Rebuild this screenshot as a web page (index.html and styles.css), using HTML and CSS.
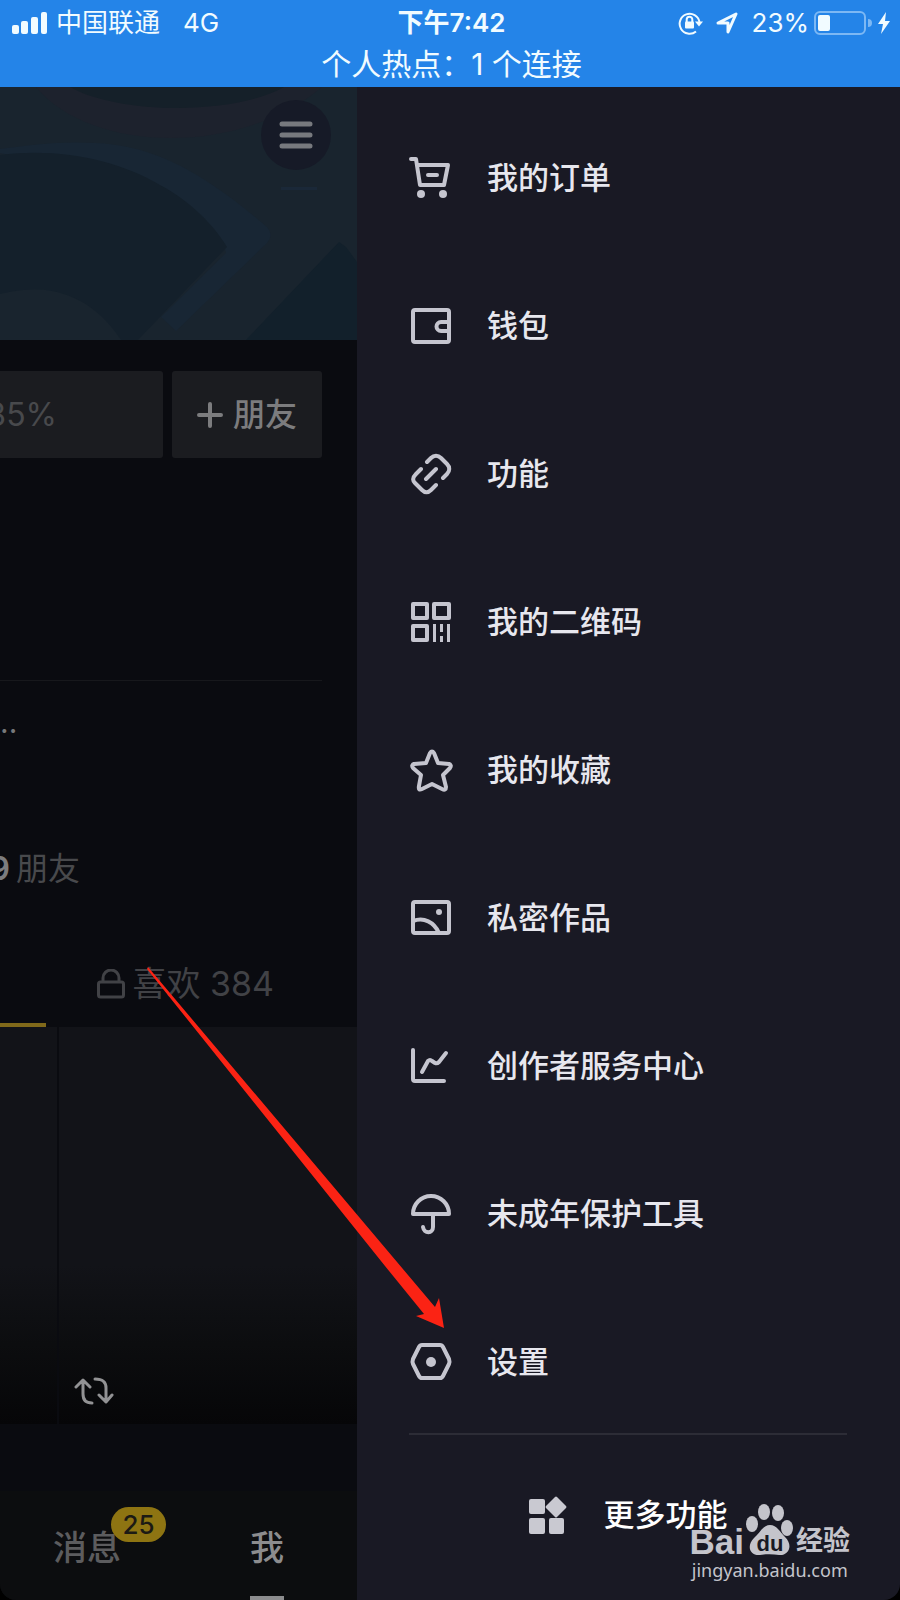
FILE: index.html
```html
<!DOCTYPE html>
<html lang="zh-CN">
<head>
<meta charset="utf-8">
<meta name="viewport" content="width=device-width, initial-scale=1">
<title>我</title>
<link rel="stylesheet" href="styles.css">
</head>
<body>
<div class="screen">
  <header class="status">
    <div class="status-row">
      <div class="status-left">
        <svg class="signal" viewBox="0 0 36 22" aria-hidden="true"><rect x="0" y="13" width="7" height="9" rx="2"/><rect x="9" y="9" width="7" height="13" rx="2"/><rect x="19" y="5" width="7" height="17" rx="2"/><rect x="29" y="0" width="6" height="22" rx="2"/></svg>
        <span class="carrier">中国联通</span>
        <span class="network">4G</span>
      </div>
      <div class="time">下午7:42</div>
      <div class="status-right">
        <svg class="rotation" viewBox="0 0 26 24" aria-hidden="true"><path class="line" d="M18 20.500A10 10 0 1 1 21.500 11"/><path d="M17 10.500h8l-4 5z"/><rect x="7" y="10.500" width="9" height="7" rx="1"/><path class="thin" d="M8.700 11V8.500a2.800 2.800 0 0 1 5.600 0V11"/></svg>
        <svg class="location" viewBox="0 0 22 22" aria-hidden="true"><path d="M2 11 20 2 12 20V11z"/></svg>
        <span class="percent">23%</span>
        <svg class="battery" viewBox="0 0 58 26" aria-hidden="true"><rect class="shell" x="1" y="2" width="50" height="22" rx="5"/><rect x="4" y="5" width="12" height="16" rx="2"/><path class="cap" d="M54 9a4 4 0 0 1 0 8z"/></svg>
        <svg class="bolt" viewBox="0 0 14 24" aria-hidden="true"><path d="M9 1 1 13h5L4 23 13 10H8z"/></svg>
      </div>
    </div>
    <div class="hotspot">个人热点：1 个连接</div>
  </header>

  <div class="columns">
    <main class="profile">
      <div class="cover">
        <svg class="cover-art" viewBox="0 0 357 253" preserveAspectRatio="none" aria-hidden="true">
          <path fill="#152029" d="M60 0C110 28 240 34 286 0z"/>
          <path fill="#1d222d" d="M36 0C90 66 240 70 322 0H284C235 28 120 28 70 0z"/>
          <path fill="#182634" d="M0 62C30 58 60 54 95 56C150 58 200 82 267 140Q274 148 267 156L176 244L161 230L226 166Q220 110 0 66z"/>
          <path fill="#14202b" d="M0 68C60 60 120 74 160 98C190 114 214 138 227 160L138 253H121C106 230 84 210 52 204Q30 200 0 207z"/>
          <path fill="#12202b" d="M246 253 339 155 346 160 357 175V253z"/>
          <rect fill="#1a2838" x="281" y="100" width="36" height="3"/>
        </svg>
        <button class="menu-button" aria-label="菜单"><svg viewBox="0 0 34 28" aria-hidden="true"><path d="M3 3h28M3 14h28M3 25h28"/></svg></button>
      </div>
      <div class="actions">
        <button class="edit">85%</button>
        <button class="add"><svg viewBox="0 0 26 26" aria-hidden="true"><path d="M13 2v22M2 13h22"/></svg>朋友</button>
      </div>
      <div class="bio">..</div>
      <div class="stats"><strong>9</strong><span>朋友</span></div>
      <div class="tabs">
        <span class="active-line"></span>
        <button class="likes"><svg viewBox="0 0 28 30" aria-hidden="true"><rect x="1.500" y="13" width="25" height="15" rx="2"/><path d="M6 13V9a8 8 0 0 1 16 0v4"/></svg>喜欢 384</button>
      </div>
      <div class="works">
        <div class="work"></div>
        <div class="work"><svg viewBox="0 0 40 28" aria-hidden="true"><path d="M18 26C12 26 9 23 9 17V4M2 10l7-7 7 7M21 2c8 0 11 3 11 9v12M25 18l7 7 6-7"/></svg></div>
      </div>
      <nav class="bottom-nav">
        <a class="messages" href="#">消息<span class="badge">25</span></a>
        <a class="me" href="#">我</a>
      </nav>
    </main>

    <aside class="drawer">
      <nav class="menu">
        <a class="item" href="#"><svg viewBox="0 0 44 44" aria-hidden="true"><path d="M2 3h5l4 26h24l4-20H8M19 19h9"/><circle class="solid" cx="12" cy="38" r="4"/><circle class="solid" cx="34" cy="38" r="4"/></svg>我的订单</a>
        <a class="item" href="#"><svg viewBox="0 0 44 44" aria-hidden="true"><rect x="4" y="6" width="36" height="32" rx="2"/><path d="M40 18h-8a4 4 0 0 0 0 9h8"/></svg>钱包</a>
        <a class="item" href="#"><svg viewBox="0 0 44 44" aria-hidden="true"><path d="M18 10 22 6C25 3 29 3 32 6L38 12C41 15 41 19 38 22L34 26M12 17 7 22C4 25 3 28 6 31L13 38C16 41 19 41 22 38L27 33M17 27 27 17"/></svg>功能</a>
        <a class="item" href="#"><svg viewBox="0 0 44 44" aria-hidden="true"><rect x="4" y="4" width="14" height="14"/><rect x="25" y="4" width="15" height="14"/><rect x="4" y="26" width="14" height="14"/><path class="bars" d="M25.500 24v18M32.500 24v8M32.500 36v6M39.500 24v18"/></svg>我的二维码</a>
        <a class="item" href="#"><svg viewBox="0 0 44 44" aria-hidden="true"><path d="M21 5Q23 2 25 5L29 15 40 16Q43 17 41 20L34 27 37 39Q37 43 33 41L23 36 13 41Q9 43 10 38L12 27 4 20Q2 17 5 16L17 15z"/></svg>我的收藏</a>
        <a class="item" href="#"><svg viewBox="0 0 44 44" aria-hidden="true"><rect x="4" y="6" width="36" height="31" rx="2"/><path d="M4 25C15 21 25 26 30 37"/><circle class="solid" cx="30" cy="16" r="3"/></svg>私密作品</a>
        <a class="item" href="#"><svg viewBox="0 0 44 44" aria-hidden="true"><path d="M4 6v29q0 2 2 2h29M13 28l6-11q2-2 4 0l3 2q2 1 4-1l7-9"/></svg>创作者服务中心</a>
        <a class="item" href="#"><svg viewBox="0 0 44 44" aria-hidden="true"><path d="M4 22a18 18 0 0 1 36 0zM24 22v13c0 7-9 7-10 0"/></svg>未成年保护工具</a>
        <a class="item" href="#"><svg viewBox="0 0 44 44" aria-hidden="true"><path d="M13 5h18q2 0 3 2l6 12q1 3 0 5l-6 12q-1 2-3 2H13q-2 0-3-2L4 24q-1-2 0-5l6-12q1-2 3-2z"/><circle class="solid" cx="22" cy="22" r="5"/></svg>设置</a>
      </nav>
      <a class="more" href="#"><svg viewBox="0 0 38 38" aria-hidden="true"><rect x="0" y="3" width="16" height="15" rx="2"/><path d="M26 1q1-1 2 0l9 9q1 1 0 2l-9 9q-1 1-2 0l-9-9q-1-1 0-2z"/><rect x="0" y="22" width="16" height="16" rx="2"/><rect x="20" y="22" width="15" height="16" rx="2"/></svg>更多功能</a>
    </aside>
  </div>

  <svg class="pointer" viewBox="0 0 298 362" aria-hidden="true"><path d="M1 0 288 340 292 331 297 361 269 349 277 347 238 299 0 2z"/></svg>

  <div class="watermark">
    <div class="brand">
      <span class="latin">Bai</span>
      <span class="paw"><svg viewBox="0 0 48 52" aria-hidden="true"><ellipse cx="6" cy="20" rx="6" ry="8"/><ellipse cx="18" cy="8" rx="6" ry="8"/><ellipse cx="32" cy="9" rx="6" ry="8"/><ellipse cx="41" cy="24" rx="6" ry="8"/><path d="M24 21C31 21 34 28 39 33C48 42 42 52 33 51C27 50 20 50 14 51C4 52 0 42 8 34C14 29 17 21 24 21z"/></svg><span class="du">du</span></span>
      <span class="han">经验</span>
    </div>
    <div class="site">jingyan.baidu.com</div>
  </div>
</div>
</body>
</html>
```

FILE: styles.css
```css
* {
  box-sizing: border-box;
}

body {
  margin: 0;
  background: #000;
  font-family: Inter, "Noto Sans CJK SC", sans-serif;
}

button {
  border: 0;
  padding: 0;
  background: none;
  font: inherit;
}

a {
  color: inherit;
  text-decoration: none;
}

svg {
  display: block;
  flex: none;
}

.screen {
  position: relative;
  display: flex;
  flex-direction: column;
  min-height: 100vh;
  overflow: hidden;
  border-radius: 0 0 16px 16px;
}

/* Status bar */
.status {
  padding: 5px 9px 0 12px;
  background: #2484e8;
  color: #f1fbff;
}

.status-row {
  display: grid;
  grid-template-columns: 1fr auto 1fr;
  align-items: center;
  height: 36px;
  font-size: 26px;
  line-height: 36px;
}

.status-left,
.status-right {
  display: flex;
  align-items: center;
}

.status-right {
  justify-content: flex-end;
}

.status svg {
  fill: #f1fbff;
}

.signal {
  width: 36px;
  height: 22px;
}

.carrier {
  margin-left: 8px;
}

.network {
  margin-left: 23px;
}

.time {
  font-weight: 600;
}

.rotation {
  width: 26px;
  height: 24px;
}

.status .line,
.status .thin,
.status .location {
  fill: none;
  stroke: #f1fbff;
  stroke-width: 2;
}

.location {
  width: 22px;
  height: 22px;
  margin-left: 12px;
  stroke-linejoin: round;
}

.status .location {
  stroke-width: 3;
}

.percent {
  margin-left: 14px;
}

.battery {
  width: 58px;
  height: 26px;
  margin-left: 5px;
}

.status .shell {
  fill: none;
  stroke: #7db8f4;
  stroke-width: 2;
}

.status .cap {
  fill: #7db8f4;
}

.bolt {
  width: 14px;
  height: 24px;
  margin-left: 5px;
}

.hotspot {
  font-size: 30px;
  line-height: 46px;
  text-align: center;
}

.columns {
  display: grid;
  grid-template-columns: 357fr 543fr;
  flex: 1;
}

/* Dimmed profile page */
.profile {
  display: flex;
  flex-direction: column;
  min-width: 0;
  overflow: hidden;
  background: #0a0b10;
  color: #48494c;
}

.cover {
  display: grid;
  justify-items: end;
  height: 253px;
  background: #19242e;
}

.cover > * {
  grid-area: 1 / 1;
}

.cover-art {
  width: 100%;
  height: 253px;
}

.menu-button {
  display: grid;
  place-items: center;
  width: 70px;
  height: 70px;
  margin: 13px 26px;
  border-radius: 50%;
  background: #161a27;
}

.menu-button svg {
  width: 34px;
  height: 28px;
  stroke: #77797e;
  stroke-width: 5;
  stroke-linecap: round;
}

.actions {
  display: flex;
  gap: 9px;
  height: 341px;
  margin-right: 35px;
  padding-top: 31px;
  border-bottom: 1px solid #17181c;
}

.actions button {
  display: flex;
  align-items: center;
  height: 87px;
  background: #1b1c20;
  font-size: 32px;
  line-height: 44px;
}

.actions .edit {
  flex: 1;
  justify-content: flex-end;
  min-width: 0;
  padding-right: 106px;
  border-radius: 0 3px 3px 0;
  color: #48494c;
}

.actions .add {
  flex: none;
  justify-content: center;
  gap: 10px;
  width: 150px;
  border-radius: 3px;
  color: #7c7c7e;
  font-weight: 500;
}

.add svg {
  width: 26px;
  height: 26px;
  stroke: #7c7c7e;
  stroke-width: 4;
  stroke-linecap: round;
}

.bio {
  margin-top: 22px;
  color: #77787a;
  font-size: 30px;
  line-height: 38px;
}

.stats {
  display: flex;
  align-items: center;
  justify-content: flex-end;
  gap: 6px;
  width: 80px;
  margin-top: 106px;
  font-size: 32px;
  line-height: 44px;
  white-space: nowrap;
}

.stats strong {
  color: #7c7c7e;
  font-weight: 600;
}

.tabs {
  display: flex;
  justify-content: space-between;
  height: 136px;
  padding-right: 83px;
}

.active-line {
  align-self: flex-end;
  width: 46px;
  height: 4px;
  background: #80691a;
}

.likes {
  display: flex;
  align-items: center;
  gap: 7px;
  height: 50px;
  margin-top: 68px;
  color: #414246;
  font-size: 34px;
  line-height: 50px;
}

.likes svg {
  width: 28px;
  height: 30px;
  fill: none;
  stroke: #414246;
  stroke-width: 3;
}

.works {
  display: grid;
  grid-template-columns: 57px 1fr;
  gap: 2px;
  height: 397px;
}

.work {
  display: flex;
  align-items: flex-end;
  padding: 0 0 19px 15px;
  background: linear-gradient(#121318 60%, #0c0d0f 80%, #060608);
}

.work svg {
  width: 40px;
  height: 28px;
  fill: none;
  stroke: #929294;
  stroke-width: 3;
  stroke-linecap: round;
  stroke-linejoin: round;
}

.bottom-nav {
  display: flex;
  justify-content: space-between;
  flex: 1;
  max-height: 109px;
  margin-top: auto;
  padding: 0 73px 0 53px;
  background: #0c0d0f;
  font-size: 34px;
  font-weight: 500;
  line-height: 50px;
}

.bottom-nav a {
  padding-top: 32px;
}

.messages {
  position: relative;
  color: #5c5c5e;
}

.badge {
  position: absolute;
  top: 16px;
  left: 58px;
  width: 55px;
  border-radius: 18px;
  background: #8e7412;
  color: #1c1a14;
  font-size: 26px;
  line-height: 35px;
  text-align: center;
}

.me {
  border-bottom: 4px solid #8c8c8e;
  color: #8c8c8e;
}

/* Side menu */
.drawer {
  padding: 61px 53px 0 52px;
  background: #191924;
  color: #e7e7ee;
  font-size: 31px;
  font-weight: 500;
  line-height: 60px;
}

.menu {
  display: flex;
  flex-direction: column;
  gap: 88px;
  padding-bottom: 41px;
  border-bottom: 2px solid #2c2c36;
}

.item {
  display: flex;
  align-items: center;
  gap: 34px;
  height: 60px;
}

.item svg {
  width: 44px;
  height: 44px;
  fill: none;
  stroke: #c5c5cf;
  stroke-width: 4;
  stroke-linecap: round;
  stroke-linejoin: round;
}

.item .solid {
  fill: #c5c5cf;
  stroke: none;
}

.item .bars {
  stroke-width: 3;
  stroke-linecap: butt;
}

.more {
  display: flex;
  align-items: center;
  justify-content: center;
  gap: 37px;
  height: 60px;
  margin-top: 50px;
  color: #fff;
}

.more svg {
  width: 38px;
  height: 38px;
  fill: #c9c9d1;
}

/* Annotation arrow and watermark lie over the page */
.pointer {
  position: absolute;
  top: 967px;
  left: 147px;
  width: 298px;
  height: 362px;
  fill: #fb2314;
  pointer-events: none;
}

.watermark {
  position: absolute;
  right: 50px;
  bottom: 16px;
  color: #c4c4cb;
}

.brand {
  display: flex;
  align-items: flex-end;
  gap: 2px;
  height: 52px;
  font-weight: 700;
}

.latin {
  font-family: "Liberation Sans", sans-serif;
  font-size: 35px;
  line-height: 28px;
}

.paw {
  position: relative;
}

.paw svg {
  width: 48px;
  height: 52px;
  fill: #c4c4cb;
}

.du {
  position: absolute;
  right: 0;
  bottom: 1px;
  left: 0;
  color: #191924;
  font-family: "Liberation Sans", sans-serif;
  font-size: 22px;
  line-height: 22px;
  text-align: center;
}

.han {
  font-size: 27px;
  line-height: 30px;
}

.site {
  font-family: "Noto Sans", sans-serif;
  font-size: 18px;
  line-height: 28px;
  text-align: center;
}
```
